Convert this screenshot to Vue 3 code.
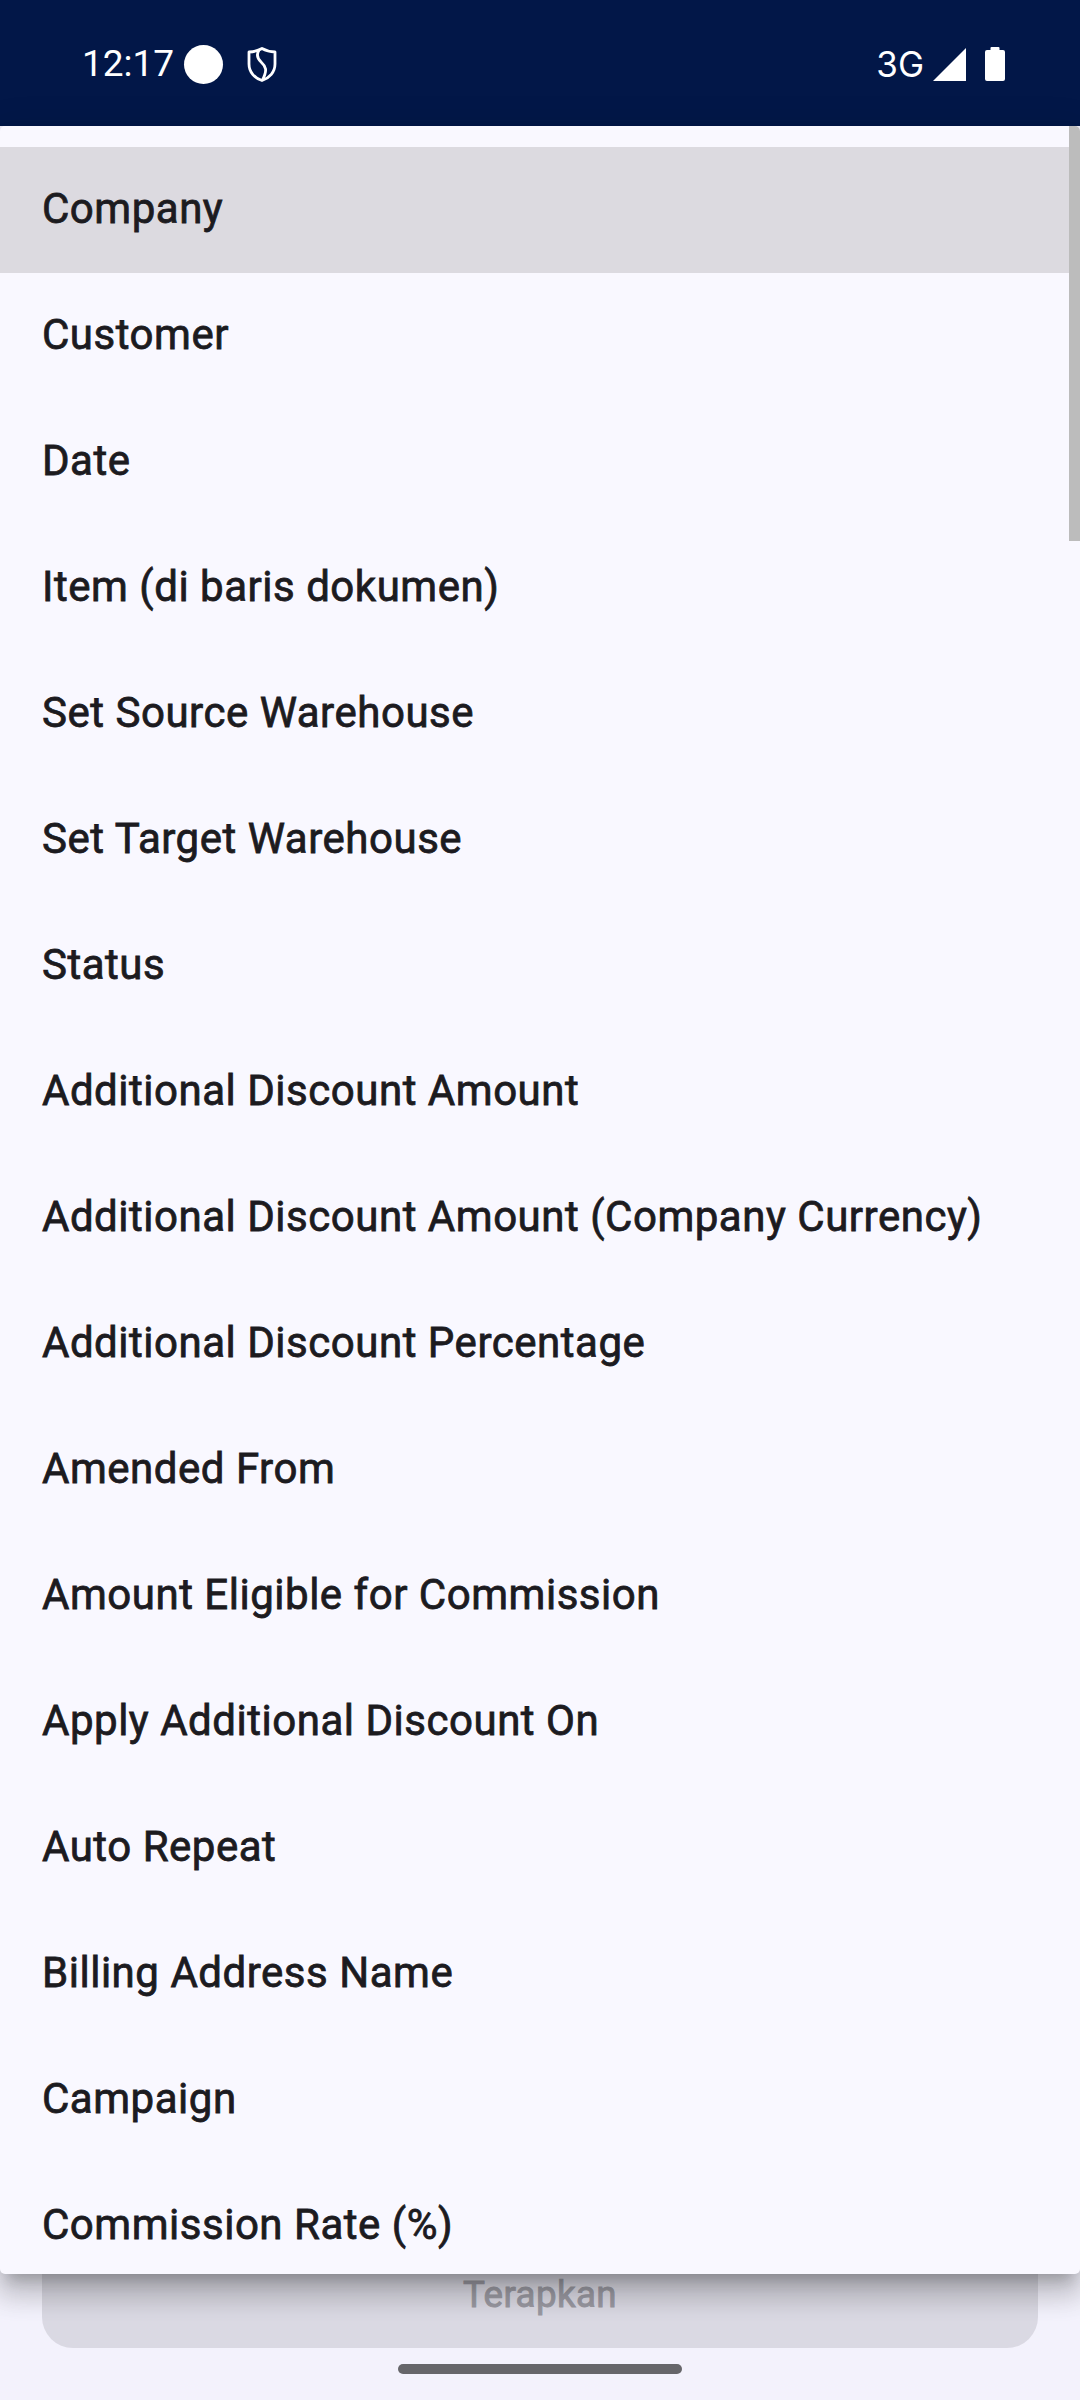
<script setup>
const items = [
  'Company', 'Customer', 'Date', 'Item (di baris dokumen)', 'Set Source Warehouse',
  'Set Target Warehouse', 'Status', 'Additional Discount Amount',
  'Additional Discount Amount (Company Currency)', 'Additional Discount Percentage',
  'Amended From', 'Amount Eligible for Commission', 'Apply Additional Discount On',
  'Auto Repeat', 'Billing Address Name', 'Campaign', 'Commission Rate (%)'
]
</script>

<template>
  <div class="page">
    <header class="status">
      <div class="status-left">
        <span class="time">12:17</span>
        <span class="dot"></span>
        <svg class="shield" viewBox="0 0 29 35" fill="none" stroke="#fff" stroke-width="2.8" stroke-linejoin="round">
          <path d="M14.5 1.5 C18 3.5 23 4.8 27.5 5 V17 C27.5 25 22 31 14.5 33.5 C7 31 1.5 25 1.5 17 V5 C6 4.8 11 3.5 14.5 1.5 Z" />
          <path d="M11.5 3 C8.5 8 10 12 14 15.5 C18.5 19.5 20 23 15 33" />
        </svg>
      </div>
      <div class="status-right">
        <span class="net">3G</span>
        <svg class="signal" viewBox="0 0 33 33"><path d="M33 0 V33 H0 Z" fill="#fff" /></svg>
        <svg class="battery" viewBox="0 0 20 34"><path d="M6.5 0 H13.5 A1 1 0 0 1 14.5 1 V3 H18 A2 2 0 0 1 20 5 V32 A2 2 0 0 1 18 34 H2 A2 2 0 0 1 0 32 V5 A2 2 0 0 1 2 3 H5.5 V1 A1 1 0 0 1 6.5 0 Z" fill="#fff" /></svg>
      </div>
    </header>

    <main class="body">
      <button class="apply" disabled>Terapkan</button>
      <div class="handle"></div>
    </main>

    <div class="menu">
      <ul class="list">
        <li v-for="(item, i) in items" :key="item" class="row" :class="{ selected: i === 0 }">{{ item }}</li>
      </ul>
      <div class="thumb"></div>
    </div>
  </div>
</template>

<style scoped>
.page {
  position: relative;
  width: 1080px;
  height: 2400px;
  overflow: hidden;
  display: flex;
  flex-direction: column;
  background: #f3f2fc;
  font-family: Roboto, "Liberation Sans", sans-serif;
}
.status {
  height: 126px;
  flex: none;
  background: #021748;
  color: #fff;
  display: flex;
  justify-content: space-between;
  align-items: flex-start;
  padding: 46px 75px 0 82px;
  box-sizing: border-box;
}
.status-left, .status-right { display: flex; align-items: center; height: 36px; }
.time { font-size: 37px; line-height: 36px; width: 102px; }
.dot { width: 39px; height: 39px; border-radius: 50%; background: #fff; }
.shield { width: 30px; height: 35px; margin-left: 24px; }
.net { font-family: Inter, Roboto, sans-serif; font-size: 35px; line-height: 36px; }
.signal { width: 33px; height: 33px; margin-left: 9px; }
.battery { width: 20px; height: 34px; margin-left: 19px; }
.body {
  flex: 1;
  display: flex;
  flex-direction: column;
  justify-content: flex-end;
  align-items: center;
  padding: 0 42px 26px;
}
.apply {
  width: 996px;
  height: 110px;
  border: 0;
  border-radius: 31px;
  padding: 4px 0 0;
  background: #dad9e3;
  color: #9a99a2;
  font: 400 36.75px/1 Roboto, sans-serif;
  letter-spacing: 0.36px;
  -webkit-text-stroke: 0.9px currentColor;
  text-align: center;
}
.handle {
  width: 284px;
  height: 10px;
  border-radius: 5px;
  margin-top: 16px;
  background: #66666a;
}
.menu {
  position: absolute;
  top: 126px;
  left: 0;
  width: 1080px;
  height: 2148px;
  overflow: hidden;
  border-radius: 5px;
  background: #f9f8ff;
  box-shadow: 0 13px 13px -8px rgba(0,0,0,.2), 0 21px 26px 3px rgba(0,0,0,.14), 0 8px 37px 5px rgba(0,0,0,.12);
}
.list { list-style: none; margin: 0; padding: 21px 0 0; }
.row {
  height: 126px;
  box-sizing: border-box;
  padding: 0 42px 4px;
  display: flex;
  align-items: center;
  font-size: 42px;
  font-weight: 400;
  letter-spacing: 0.52px;
  -webkit-text-stroke: 0.8px currentColor;
  color: #1c1b1f;
  white-space: nowrap;
}
.row.selected { background: #dcdae0; }
.thumb {
  position: absolute;
  top: 0;
  right: 0;
  width: 11px;
  height: 415px;
  background: #bcbcbc;
}
</style>
